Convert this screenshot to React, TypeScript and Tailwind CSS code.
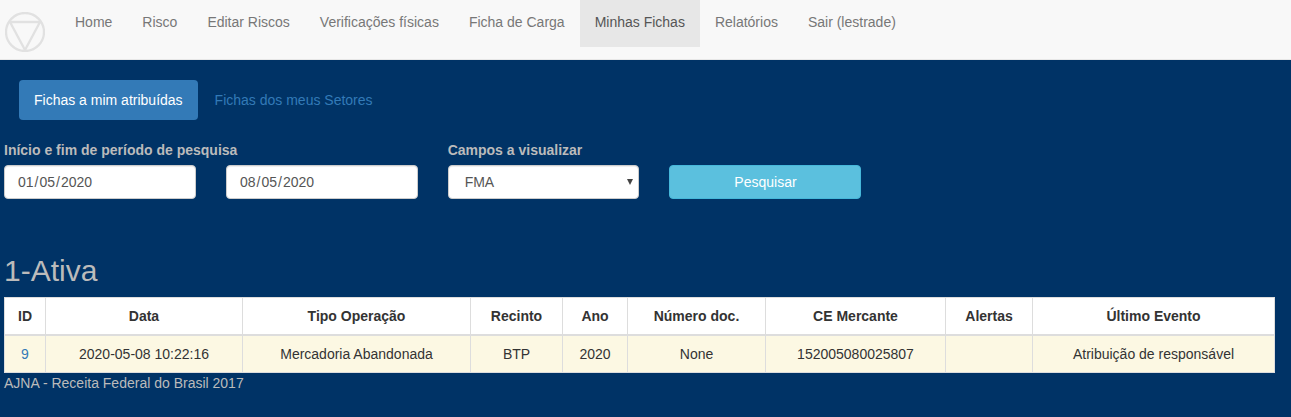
const navItems = [
  'Home',
  'Risco',
  'Editar Riscos',
  'Verificações físicas',
  'Ficha de Carga',
  'Minhas Fichas',
  'Relatórios',
  'Sair (lestrade)',
];

const columns = [
  { title: 'ID', width: 'w-[42px]', value: '9' },
  { title: 'Data', width: 'w-[197px]', value: '2020-05-08 10:22:16' },
  { title: 'Tipo Operação', width: 'w-[228px]', value: 'Mercadoria Abandonada' },
  { title: 'Recinto', width: 'w-[92px]', value: 'BTP' },
  { title: 'Ano', width: 'w-[65px]', value: '2020' },
  { title: 'Número doc.', width: 'w-[138px]', value: 'None' },
  { title: 'CE Mercante', width: 'w-[180px]', value: '152005080025807' },
  { title: 'Alertas', width: 'w-[87px]', value: '' },
  { title: 'Último Evento', width: 'w-[242px]', value: 'Atribuição de responsável' },
];

function Logo() {
  return (
    <svg className="ml-[5px] mt-3 h-10 w-10 shrink-0" viewBox="0 0 40 40" fill="none" stroke="#e1e1e1" strokeWidth="2.3">
      <circle cx="20" cy="20" r="19" />
      <path d="M4 10H36M5 10L20 38L35 10" />
    </svg>
  );
}

function DateField({ parts }: { parts: string[] }) {
  return (
    <div className="flex h-[34px] w-48 items-center rounded border border-[#ccc] bg-white px-3 text-[#555] shadow-[inset_0_1px_1px_rgba(0,0,0,0.075)]">
      <span className="px-px">{parts[0]}</span>/<span className="px-px">{parts[1]}</span>/
      <span className="px-px">{parts[2]}</span>
    </div>
  );
}

export default function App() {
  return (
    <div className="h-[417px] w-[1291px] overflow-hidden bg-[#003366] font-['Liberation_Sans',Arial,sans-serif] text-[14px] leading-5 text-[#bbb]">
      <nav className="flex h-[60px] items-start border-b border-[#e7e7e7] bg-[#f8f8f8]">
        <Logo />
        <ul className="ml-[15px] flex">
          {navItems.map((item) => (
            <li key={item}>
              <a
                href="#"
                className={`block px-[15px] pb-[15px] pt-3 ${
                  item === 'Minhas Fichas' ? 'bg-[#e7e7e7] text-[#555]' : 'text-[#777]'
                }`}
              >
                {item}
              </a>
            </li>
          ))}
        </ul>
      </nav>

      <div className="flex gap-[2px] pl-[19px] pt-5">
        <a href="#" className="rounded bg-[#337ab7] px-[15px] py-[10px] text-white">
          Fichas a mim atribuídas
        </a>
        <a href="#" className="rounded px-[15px] py-[10px] text-[#337ab7]">
          Fichas dos meus Setores
        </a>
      </div>

      <form className="flex items-end pl-1 pt-5">
        <div>
          <label className="mb-[5px] block font-bold">Início e fim de período de pesquisa</label>
          <div className="flex gap-[30px]">
            <DateField parts={['01', '05', '2020']} />
            <DateField parts={['08', '05', '2020']} />
          </div>
        </div>
        <div className="ml-[29.66px]">
          <label className="mb-[5px] block font-bold">Campos a visualizar</label>
          <div className="flex h-[34px] w-[191.34px] items-center justify-between rounded border border-[#ccc] bg-white pl-4 pr-[5px] text-[#555] shadow-[inset_0_1px_1px_rgba(0,0,0,0.075)]">
            <span>FMA</span>
            <svg className="h-[6px] w-[6px]" viewBox="0 0 6 6" fill="#444">
              <path d="M0 0H6L3 6Z" />
            </svg>
          </div>
        </div>
        <button type="button" className="ml-[30px] h-[34px] w-48 rounded border border-[#46b8da] bg-[#5bc0de] pl-px text-white">
          Pesquisar
        </button>
      </form>

      <h2 className="mb-[10px] ml-1 mt-[55px] text-[30px] leading-[33px]">1-Ativa</h2>

      <table className="ml-1 w-[1271px] table-fixed border-separate border-spacing-0 text-center text-[#333]">
        <thead>
          <tr className="bg-white">
            {columns.map(({ title, width }) => (
              <th key={title} className={`${width} h-[39px] border-b-2 border-r border-t border-[#ddd] p-0 first:border-l`}>
                {title}
              </th>
            ))}
          </tr>
        </thead>
        <tbody>
          <tr className="bg-[#fcf8e3]">
            {columns.map(({ title, value }) => (
              <td key={title} className="h-[37px] border-b border-r border-[#ddd] p-0 first:border-l first:text-[#337ab7]">
                {value}
              </td>
            ))}
          </tr>
        </tbody>
      </table>
      <footer className="ml-1">AJNA - Receita Federal do Brasil 2017</footer>
    </div>
  );
}
